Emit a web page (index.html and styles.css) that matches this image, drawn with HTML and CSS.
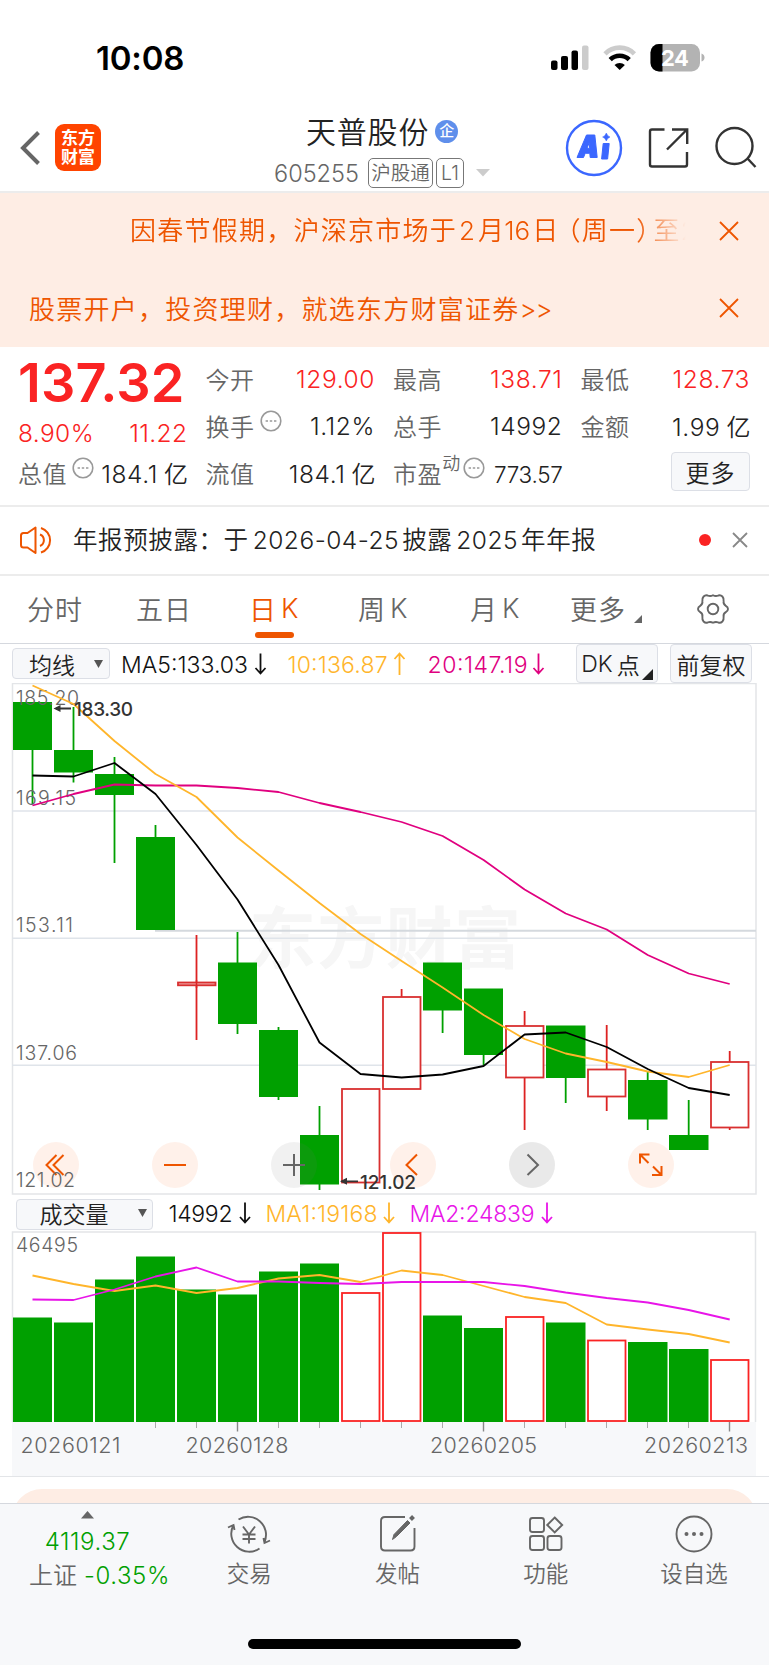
FILE: index.html
```html
<!DOCTYPE html>
<html lang="zh-CN">
<head>
  <meta charset="UTF-8" />
  <meta name="viewport" content="width=device-width, initial-scale=1.0"/>
  <title>天普股份 605255</title>
  <link rel="stylesheet" href="styles.css">
</head>
<body>
  <div class="status-bar">
    <span class="time">10:08</span>
    <svg class="status-icons" width="156" height="30" viewBox="549 42.500 156 30">
      <rect x="551" y="60" width="6.5" height="9.5" rx="2"/>
      <rect x="561" y="55.500" width="7" height="14" rx="2"/>
      <rect x="571.500" y="50" width="6.500" height="19.500" rx="2"/>
      <rect x="582" y="45" width="6.500" height="24.500" rx="2" fill="#ccc"/>
      <g fill="none" stroke-width="4.600">
        <path d="M605 53.300a20.500 20.500 0 0 1 29.400 0" stroke="#ccc"/>
        <path d="M610.200 59.200a13.500 13.500 0 0 1 19 0" stroke="#000"/>
      </g>
      <path d="M619.700 69.500l-5.200-5a7.500 7.500 0 0 1 10.400 0z"/>
      <clipPath id="battery"><rect x="650.500" y="43.500" width="49.500" height="27.500" rx="8.500"/></clipPath>
      <g clip-path="url(#battery)">
        <rect x="650" y="43" width="51" height="29" fill="#b3b3b3"/>
        <rect x="650" y="43" width="12.500" height="29"/>
      </g>
      <path d="M701.500 53q3 1 3 4t-3 4z" fill="#b3b3b3"/>
      <text x="661" y="65" class="battery-text" textLength="28">24</text>
    </svg>
  </div>

  <header class="header">
    <div class="header-left">
      <svg width="22" height="38" viewBox="0 0 22 38"><path d="M18.500 3.500L3 19l15.500 15.500" fill="none" stroke="#666" stroke-width="4"/></svg>
      <div class="logo"><span>东方</span><span>财富</span></div>
    </div>
    <div class="header-title">
      <div class="name">天普股份<span class="badge">企</span></div>
      <div class="code">
        <span class="code-num">605255</span>
        <span class="tag tag-hgt">沪股通</span>
        <span class="tag tag-l1">L1</span>
        <svg width="14" height="8" viewBox="0 0 14 8"><path d="M0 0h14L7 7.500z" fill="#ccc"/></svg>
      </div>
    </div>
    <svg class="header-icons" width="195" height="60" viewBox="564 118 195 60">
      <circle cx="594" cy="148" r="27" fill="none" stroke="#3b67ff" stroke-width="2.400"/>
      <g fill="#3b67ff" stroke="#3b67ff" stroke-linejoin="round">
        <path fill-rule="evenodd" stroke-width="1" d="M577 157.500l9.500-22.500h8.300l2.400 22.500h-7l-.4-4.200h-4.600l-1.700 4.200zM587 148.300h2.700l-.5-5.500z"/>
        <path stroke-width="1" d="M603.200 143.500h6l-1.600 15.500h-6z"/>
        <path stroke-width=".5" d="M606.300 133q1 3 3.700 4-2.700 1-3.700 4-1-3-3.700-4 2.700-1 3.700-4z"/>
      </g>
      <g fill="none" stroke="#333" stroke-width="2.400">
        <path d="M664.500 129.500H652q-2 0-2 2v33q0 2 2 2h33q2 0 2-2V152"/>
        <path d="M672 129.500h15.200V144M687 129.500l-20 20"/>
        <circle cx="734.500" cy="146" r="18"/>
        <path d="M747.500 158.500l8 8.500"/>
      </g>
    </svg>
  </header>

  <div class="notices">
    <div class="notice">
      <p class="marquee">因春节假期，沪深京市场于<i>2</i>月<i class="day">16</i>日<b>（</b>周一<b class="close">）</b>至2</p>
      <svg width="20" height="20" viewBox="0 0 20 20"><path d="M1 1l18 18M19 1L1 19"/></svg>
    </div>
    <div class="notice">
      <p>股票开户，投资理财，就选东方财富证券<em>&gt;&gt;</em></p>
      <svg width="20" height="20" viewBox="0 0 20 20"><path d="M1 1l18 18M19 1L1 19"/></svg>
    </div>
  </div>

  <section class="quote">
    <div class="col">
      <div class="price">137.32</div>
      <div class="cell change red"><span>8.90%</span><span>11.22</span></div>
      <div class="cell"><label>总值<svg class="more-dot" width="22" height="22" viewBox="0 0 22 22"><circle cx="11" cy="11" r="9.800"/><path d="M5.600 11h2.400M9.800 11h2.400M14 11h2.400"/></svg></label><span>184.1<u>亿</u></span></div>
    </div>
    <div class="col">
      <div class="cell"><label>今开</label><span class="red">129.00</span></div>
      <div class="cell"><label>换手<svg class="more-dot" width="22" height="22" viewBox="0 0 22 22"><circle cx="11" cy="11" r="9.800"/><path d="M5.600 11h2.400M9.800 11h2.400M14 11h2.400"/></svg></label><span>1.12%</span></div>
      <div class="cell"><label>流值</label><span>184.1<u>亿</u></span></div>
    </div>
    <div class="col">
      <div class="cell"><label>最高</label><span class="red">138.71</span></div>
      <div class="cell"><label>总手</label><span>14992</span></div>
      <div class="cell pe"><label>市盈<sup>动</sup><svg class="more-dot" width="22" height="22" viewBox="0 0 22 22"><circle cx="11" cy="11" r="9.800"/><path d="M5.600 11h2.400M9.800 11h2.400M14 11h2.400"/></svg></label><span>773.57</span></div>
    </div>
    <div class="col">
      <div class="cell"><label>最低</label><span class="red">128.73</span></div>
      <div class="cell"><label>金额</label><span>1.99<u>亿</u></span></div>
      <button class="btn btn-more">更多</button>
    </div>
  </section>

  <div class="bulletin">
    <svg width="34" height="30" viewBox="17 524.500 34 30" fill="none" stroke="#ee5500" stroke-width="2" stroke-linejoin="round">
      <path d="M34.500 527v25.500l-8-5.500h-4q-2.500 0-2.500-2.500v-9.500q0-2.500 2.500-2.500h4z"/>
      <path d="M39 534a6.200 6.200 0 0 1 0 11.500M40 527.500a12.800 12.800 0 0 1 0 24.500"/>
    </svg>
    <p>年报预披露：于<i>2026-04-25</i>披露<i>2025</i>年年报</p>
    <span class="dot"></span>
    <svg width="16" height="16" viewBox="0 0 16 16"><path d="M1 1l14 14M15 1L1 15" stroke="#888" stroke-width="1.800"/></svg>
  </div>

  <nav class="tabs">
    <a>分时</a>
    <a>五日</a>
    <a class="active">日<i>K</i></a>
    <a>周<i>K</i></a>
    <a>月<i>K</i></a>
    <a class="tab-more">更多<svg width="8" height="8" viewBox="0 0 8 8"><path d="M8 0v8H0z" fill="#666"/></svg></a>
    <svg class="gear" width="34" height="32" viewBox="-17 -16 34 32" fill="none" stroke="#666" stroke-width="1.900" stroke-linejoin="round">
      <path d="M-15 0q0-2 2.200-3.200 2.700-1.500 2.200-4.600-.4-3 1.200-4.700 1.800-1.800 4-1 2.800 1.200 5.400-.3 2.600 1.500 5.400.3 2.200-.8 4 1 1.600 1.700 1.200 4.700-.5 3.100 2.200 4.600Q15-2 15 0t-2.200 3.200q-2.700 1.500-2.200 4.600.4 3-1.200 4.700-1.800 1.800-4 1-2.800-1.200-5.400.3-2.600-1.500-5.400-.3-2.200.8-4-1-1.600-1.700-1.200-4.700.5-3.100-2.200-4.600Q-15 2-15 0z"/>
      <circle r="5.300"/>
    </svg>
  </nav>

  <div class="indicator-row">
    <button class="btn btn-ma">均线<svg width="9" height="8" viewBox="0 0 9 8"><path d="M0 0h9L4.500 8z" fill="#555"/></svg></button>
    <svg class="legend" width="450" height="32" viewBox="116 648 450 32">
      <text x="122" y="672.500" textLength="127">MA5:133.03</text>
      <text class="yellow" x="288.500" y="672.500" textLength="100">10:136.87</text>
      <text class="pink" x="428.500" y="672.500" textLength="100">20:147.19</text>
      <path d="M261.500 653.500v20M256.500 668l5 5.500 5-5.500" stroke="#111"/>
      <path d="M400.500 675v-21M395.500 659l5-5.500 5 5.500" stroke="#ffb52b"/>
      <path d="M539.500 653.500v20M534.500 668l5 5.500 5-5.500" stroke="#e0007f"/>
    </svg>
    <button class="btn btn-dk">DK<u>点</u><svg width="11" height="11" viewBox="0 0 11 11"><path d="M11 0v11H0z" fill="#222"/></svg></button>
    <button class="btn btn-fq">前复权</button>
  </div>

  <div class="kline">
    <svg width="769" height="513" viewBox="0 683 769 513">
      <text class="watermark" x="249" y="963" textLength="272">东方财富</text>
      <g fill="none" stroke="#dfe4ea" stroke-width="1.500">
        <path d="M12.500 683.500H756v510.500H12.500z" stroke="#e3e5e8"/>
        <path d="M12 811h744M12 938.300h744M12 1065.300h744"/>
      </g>
      <path d="M155 930.700h601" stroke="#d4d9de" stroke-width="2"/>

      <!-- wicks -->
      <path stroke="#00a000" stroke-width="1.800" d="M32.500 702v102M73.500 707v75.500M114.500 757v106M155.500 825v105M237.500 932v102M278.500 1027v73M319.500 1106v84M442.600 963v70M483.600 989v76M565.700 1026v77M647.700 1072v58M688.700 1100v40"/>
      <path stroke="#d22" stroke-width="1.800" d="M196.500 935v105M401.600 989v8M524.600 1011v15M524.600 1078v52M606.700 1025v44M606.700 1097v14M729.700 1051v11M729.700 1127v3"/>

      <!-- falling days -->
      <g fill="#00a000">
        <rect x="13" y="702" width="39" height="48"/>
        <rect x="54" y="750" width="39" height="22.500"/>
        <rect x="95" y="774" width="39" height="21"/>
        <rect x="136" y="837" width="39" height="93"/>
        <rect x="218" y="962.500" width="39" height="61.500"/>
        <rect x="259" y="1030" width="39" height="67"/>
        <rect x="300" y="1135" width="39" height="49.500"/>
        <rect x="423" y="962.500" width="39" height="48"/>
        <rect x="464" y="988.500" width="39" height="66.500"/>
        <rect x="546" y="1025.500" width="39.500" height="52.500"/>
        <rect x="628" y="1080" width="39.500" height="39.500"/>
        <rect x="669" y="1135" width="39.500" height="15"/>
      </g>

      <!-- rising days -->
      <g fill="#fff" stroke="#d93030" stroke-width="1.800">
        <rect x="178" y="982.500" width="37.500" height="2.800" fill="#f0b0b0"/>
        <rect x="342" y="1089" width="37.500" height="93.500"/>
        <rect x="383" y="997" width="37.500" height="92"/>
        <rect x="506" y="1026" width="37.500" height="51.500"/>
        <rect x="588" y="1069.500" width="37.500" height="27"/>
        <rect x="711" y="1062" width="37.500" height="65.500"/>
      </g>
      <path d="M196.500 980v8" stroke="#d22" stroke-width="1.500"/>

      <g class="axis">
        <text x="16" y="704.500" textLength="63">185.20</text>
        <text x="16" y="804.500" textLength="60">169.15</text>
        <text x="16" y="932" textLength="57">153.11</text>
        <text x="16" y="1059.500" textLength="61">137.06</text>
      </g>

      <g fill="none" stroke-width="1.800" stroke-linejoin="round">
        <polyline stroke="#e0007f" points="32.500,805.500 73.500,794 114.500,784.500 155.500,785.500 196.500,785.500 237.500,788 278.500,792 319.500,803 360.500,812 401.600,822 442.600,836 483.600,860 524.600,889.500 565.700,913.500 606.700,929.500 647.700,955 688.700,973.500 729.700,984"/>
        <polyline stroke="#ffb52b" points="32.500,685.500 73.500,704 114.500,741 155.500,774 196.500,797 237.500,837.500 278.500,870.500 319.500,903 360.500,934 401.600,961 442.600,987.500 483.600,1015 524.600,1039 565.700,1053.500 606.700,1062 647.700,1071.500 688.700,1077 729.700,1065"/>
        <polyline stroke="#000" points="32.500,775.500 73.500,776.500 114.500,763 155.500,794 196.500,845 237.500,899.500 278.500,965 319.500,1042.500 360.500,1074 401.600,1077.500 442.600,1074.500 483.600,1066 524.600,1034.500 565.700,1032.500 606.700,1047 647.700,1069 688.700,1088 729.700,1095"/>
      </g>
    </svg>
    <div class="controls">
      <button class="round"><svg width="46" height="46" viewBox="0 0 46 46"><path d="M23.500 13l-10 10 10 10M30.500 13l-10 10 10 10"/></svg></button>
      <button class="round"><svg width="46" height="46" viewBox="0 0 46 46"><path d="M12 23h22"/></svg></button>
      <button class="round gray light"><svg width="46" height="46" viewBox="0 0 46 46"><path d="M12 23h22M23 12v22"/></svg></button>
      <button class="round"><svg width="46" height="46" viewBox="0 0 46 46"><path d="M27 12.500L16.500 23 27 33"/></svg></button>
      <button class="round gray"><svg width="46" height="46" viewBox="0 0 46 46"><path d="M18.500 12.500L29 23 18.500 33"/></svg></button>
      <button class="round"><svg width="46" height="46" viewBox="0 0 46 46"><path d="M12 21.500V12.500h9.500M12.500 13l8 8M33.500 24v9H24M33 32.500l-8-8"/></svg></button>
    </div>
    <!-- period high and low, above the controls -->
    <svg class="marks" width="769" height="513" viewBox="0 683 769 513">
      <path d="M56 708.500h15M341.500 1181.300H358" stroke="#333" stroke-width="1.800"/>
      <path d="M53.500 708.500l7-3.500v7zM340 1181.300l7-3.500v7z"/>
      <text x="74" y="716" textLength="59">183.30</text>
      <text x="360" y="1189" textLength="56">121.02</text>
      <text class="axis" x="16" y="1187" textLength="59">121.02</text>
    </svg>
  </div>

  <div class="indicator-row volume-row">
    <button class="btn btn-vol">成交量<svg width="9" height="8" viewBox="0 0 9 8"><path d="M0 0h9L4.500 8z" fill="#555"/></svg></button>
    <svg class="legend" width="410" height="32" viewBox="158.500 1198 410 32">
      <text x="169" y="1221.500" textLength="64">14992</text>
      <text class="yellow" x="266" y="1221.500" textLength="112">MA1:19168</text>
      <text class="purple" x="410" y="1221.500" textLength="125">MA2:24839</text>
      <path d="M245.500 1202.500v20M240.500 1217l5 5.500 5-5.500" stroke="#111"/>
      <path d="M389.500 1202.500v20M384.500 1217l5 5.500 5-5.500" stroke="#ffb52b"/>
      <path d="M547.500 1202.500v20M542.500 1217l5 5.500 5-5.500" stroke="#e815e8"/>
    </svg>
  </div>

  <div class="volume">
    <svg width="769" height="246" viewBox="0 1231 769 246">
      <rect x="12" y="1422" width="744" height="54" fill="#f7f8fa"/>
      <path d="M12.500 1422V1232H755.500v190" fill="none" stroke="#e3e5e8" stroke-width="1.500"/>
      <text class="axis" x="16" y="1251.500" textLength="62">46495</text>
      <g fill="#00a000">
        <rect x="13" y="1317.500" width="39" height="104.500"/>
        <rect x="54" y="1322.500" width="39" height="99.500"/>
        <rect x="95" y="1279.500" width="39" height="142.500"/>
        <rect x="136" y="1256.500" width="39" height="165.500"/>
        <rect x="177" y="1289.500" width="39" height="132.500"/>
        <rect x="218" y="1294.500" width="39" height="127.500"/>
        <rect x="259" y="1271.500" width="39" height="150.500"/>
        <rect x="300" y="1263.500" width="39" height="158.500"/>
        <rect x="423" y="1315.500" width="39" height="106.500"/>
        <rect x="464" y="1328" width="39" height="94"/>
        <rect x="546" y="1322.500" width="39.500" height="99.500"/>
        <rect x="628" y="1342" width="39.500" height="80"/>
        <rect x="669" y="1349" width="39.500" height="73"/>
      </g>
      <g fill="#fff" stroke="#fa2323" stroke-width="1.800">
        <rect x="342" y="1293" width="37.500" height="128"/>
        <rect x="383" y="1233" width="37.500" height="188"/>
        <rect x="506" y="1317" width="37.500" height="104"/>
        <rect x="588" y="1340.500" width="37.500" height="80.500"/>
        <rect x="711" y="1360" width="37.500" height="61"/>
      </g>
      <g fill="none" stroke-width="1.800" stroke-linejoin="round">
        <polyline stroke="#ffb52b" points="32.500,1275.500 73.500,1284 114.500,1291 155.500,1285.500 196.500,1293 237.500,1288 278.500,1278.500 319.500,1275 360.500,1282 401.600,1270.500 442.600,1275 483.600,1286 524.600,1297 565.700,1303 606.700,1324.500 647.700,1329.500 688.700,1334 729.700,1342.500"/>
        <polyline stroke="#e815e8" points="32.500,1299.500 73.500,1300 114.500,1289.500 155.500,1276.500 196.500,1267.500 237.500,1281.500 278.500,1281.500 319.500,1283 360.500,1284 401.600,1282 442.600,1282 483.600,1282 524.600,1286 565.700,1292.500 606.700,1298 647.700,1302.500 688.700,1310 729.700,1319.500"/>
      </g>
      <path stroke="#aaa" d="M155.500 1422v6M196.500 1422v6M278.500 1422v6M319.500 1422v6M360.500 1422v6M401.500 1422v6M442.500 1422v6M524.500 1422v6M565.500 1422v6M606.500 1422v6M647.500 1422v6M688.500 1422v6"/>
      <path stroke="#888" stroke-width="1.400" d="M237.500 1422v9.500M483.500 1422v9.500M729.500 1422v9.500"/>
      <g class="dates">
        <text x="20.500" y="1452.700" textLength="100">20260121</text>
        <text x="185.500" y="1452.700" textLength="103">20260128</text>
        <text x="430" y="1452.700" textLength="107">20260205</text>
        <text x="644" y="1452.700" textLength="104">20260213</text>
      </g>
    </svg>
  </div>

  <div class="next-card"><div class="card-top"></div></div>

  <footer class="bottom-bar">
    <div class="index">
      <svg width="13" height="8" viewBox="0 0 13 8"><path d="M6.500 0L13 7.500H0z" fill="#666"/></svg>
      <div class="index-value">4119.37</div>
      <div class="index-name">上证<span>-0.35%</span></div>
    </div>
    <div class="nav-item">
      <svg width="46" height="42" viewBox="227 1513 46 42">
        <path d="M239.500 1519.500a18 18 0 0 1 26 22.500M260.500 1548.500a18 18 0 0 1-26-23.500M229 1527.500l5.500-2.500 1 5M271 1540.500l-5.500 2.500-1-5"/>
        <path d="M244 1526.500l6 8 6-8M250 1534.500v9M243.500 1534.500h13M243.500 1539h13"/>
      </svg>
      <span>交易</span>
    </div>
    <div class="nav-item">
      <svg width="46" height="42" viewBox="375 1513 46 42">
        <path d="M406 1517h-20q-4 0-4 4v25.500q0 4 4 4h25.500q4 0 4-4V1528"/>
        <path d="M393.500 1539.500l1.500-5 13.500-14 2.500 2.500-13.500 13.500z" fill="#666" stroke-width="1"/>
        <path d="M411.500 1519.500l3-3" stroke-width="4"/>
      </svg>
      <span>发帖</span>
    </div>
    <div class="nav-item">
      <svg width="46" height="42" viewBox="524 1513 46 42">
        <rect x="531" y="1518" width="14" height="14" rx="2.500"/>
        <rect x="531" y="1536" width="14" height="14" rx="2.500"/>
        <rect x="548.500" y="1536" width="14" height="14" rx="2.500"/>
        <path d="M555.700 1517.500l7.500 7.500-7.500 7.500-7.500-7.500z"/>
      </svg>
      <span>功能</span>
    </div>
    <div class="nav-item">
      <svg width="46" height="42" viewBox="672 1513 46 42">
        <circle cx="695" cy="1534" r="17.500"/>
        <g fill="#666" stroke="none"><circle cx="687.500" cy="1534" r="2"/><circle cx="695" cy="1534" r="2"/><circle cx="702.500" cy="1534" r="2"/></g>
      </svg>
      <span>设自选</span>
    </div>
    <div class="home-indicator"></div>
  </footer>
</body>
</html>
```

FILE: styles.css
```css
*, *::before, *::after {
  box-sizing: border-box;
}

body {
  margin: 0;
  width: 769px;
  height: 1665px;
  overflow: hidden;
  background: #fff;
  color: #222;
  font-family: Inter, "Noto Sans CJK SC", sans-serif;
  font-weight: 360;
  display: flex;
  flex-direction: column;
}

svg {
  display: block;
  flex: none;
}

p {
  margin: 0;
}

i, em, u {
  font-style: normal;
  text-decoration: none;
}

button {
  font-family: inherit;
  font-weight: inherit;
  color: inherit;
  padding: 0;
  border: none;
}

.red {
  color: #fa2323;
}

/* status bar */
.status-bar {
  height: 115px;
  padding: 0 64px 0 96px;
  display: flex;
  justify-content: space-between;
  align-items: center;
}

.time {
  font-size: 33px;
  font-weight: 600;
  color: #000;
  letter-spacing: -0.2px;
}

.battery-text {
  font-size: 22px;
  font-weight: 700;
  fill: #fff;
}

/* header */
.header {
  height: 78px;
  border-bottom: 2px solid #ececec;
  padding: 0 10px 0 20px;
  display: grid;
  grid-template-columns: 255px 1fr 195px;
}

.header-left {
  display: flex;
  align-items: center;
  gap: 13px;
  height: 65px;
}

.logo {
  width: 46px;
  height: 47px;
  border-radius: 9px;
  background: #ff4400;
  color: #fff;
  font-size: 17px;
  font-weight: 700;
  line-height: 19px;
  display: flex;
  flex-direction: column;
  align-items: center;
  justify-content: center;
}

.name {
  height: 34px;
  padding: 0 0 5px 31px;
  display: flex;
  align-items: center;
  font-size: 30px;
  letter-spacing: 0.8px;
}

.badge {
  width: 23px;
  height: 23px;
  margin: 4px 0 0 6px;
  border-radius: 50%;
  background: #5f8feb;
  color: #fff;
  font-size: 15px;
  font-weight: 500;
  line-height: 22px;
  text-align: center;
  letter-spacing: 0;
}

.code {
  margin-top: 9px;
  display: flex;
  align-items: center;
  height: 30px;
  color: #666;
}

.code-num {
  width: 93px;
  margin-left: -1px;
  margin-right: 1px;
  font-size: 23.5px;
  letter-spacing: 0;
}

.tag {
  height: 30px;
  border: 1px solid #777;
  border-radius: 5px;
  font-size: 19.5px;
  line-height: 28px;
  text-align: center;
}

.tag-hgt {
  width: 65px;
}

.tag-l1 {
  width: 28px;
  margin: 0 12px 0 3px;
}

.header-icons {
  margin-top: 3px;
}

/* notices */
.notices {
  height: 154px;
  background: #feede4;
  color: #ee5500;
}

.notice {
  height: 80px;
  padding: 0 30px 0 29px;
  display: flex;
  align-items: center;
  justify-content: space-between;
  font-size: 26px;
  letter-spacing: 1.25px;
  white-space: nowrap;
}

.notice:first-child {
  height: 75px;
}

.notice p {
  width: 661px;
  padding-bottom: 2px;
}

.notice em {
  letter-spacing: -1px;
}

.notice svg {
  fill: none;
  stroke: #ee5500;
  stroke-width: 1.8;
}

.notice .marquee {
  padding: 0 0 4px 101px;
  overflow: hidden;
  -webkit-mask-image: linear-gradient(90deg, #000 605px, transparent 657px);
  mask-image: linear-gradient(90deg, #000 605px, transparent 657px);
}

.marquee i {
  margin: 0 3px 0 2px;
  letter-spacing: 0;
}

.marquee .day {
  margin: 0 2px 0 -1px;
}

.marquee b {
  margin-left: 8px;
  font-weight: inherit;
  font-feature-settings: "halt";
}

.marquee .close {
  margin: 0 3px 0 0;
}

/* quote */
.quote {
  height: 160px;
  padding: 0 19px 0 18px;
  border-bottom: 2px solid #ececec;
  display: grid;
  grid-template-columns: repeat(4, 169.500px);
  column-gap: 18px;
}

.col {
  padding-top: 8px;
}

.price {
  height: 54px;
  margin-bottom: 7px;
  color: #fa2323;
  font-size: 54px;
  font-weight: 600;
  line-height: 55px;
  letter-spacing: 0.200px;
}

.cell {
  height: 47px;
  display: flex;
  align-items: center;
  justify-content: space-between;
  font-size: 24.5px;
  letter-spacing: 0.6px;
  white-space: nowrap;
}

.change {
  height: 33px;
  letter-spacing: 0.4px;
}

.cell label {
  display: flex;
  align-items: center;
  color: #666;
  font-size: 24px;
  letter-spacing: 0.6px;
}

.cell u {
  margin: 0 -1px 0 6px;
  font-size: 24px;
}

.cell sup {
  font-size: 18px;
  margin-top: -17px;
  line-height: 20px;
}

.more-dot {
  margin: -10px 0 0 5px;
  fill: none;
  stroke: #999;
  stroke-width: 1.6;
}

.pe .more-dot {
  margin-left: 2px;
}

.pe span {
  font-size: 22.5px;
  letter-spacing: -0.3px;
  margin-top: 4px;
}

.btn {
  display: flex;
  align-items: center;
  justify-content: center;
  background: #f7f8fa;
  border: 1.500px solid #dcdfe6;
  border-radius: 4px;
  font-size: 23px;
}

.btn-more {
  width: 79px;
  height: 39px;
  margin: 3px 0 0 auto;
  font-size: 24px;
  letter-spacing: 1px;
}

/* bulletin */
.bulletin {
  height: 69px;
  border-bottom: 2px solid #ececec;
  padding: 0 21px 2px 18px;
  display: flex;
  align-items: center;
}

.bulletin p {
  width: 626px;
  margin-left: 21px;
  padding-bottom: 2px;
  font-size: 24.500px;
  letter-spacing: 0.6px;
  white-space: nowrap;
}

.bulletin i {
  margin: 0 3px 0 4px;
  letter-spacing: 0.5px;
}

.dot {
  width: 12px;
  height: 12px;
  margin: 0 21px 0 auto;
  border-radius: 50%;
  background: #fa2323;
}

/* tabs */
.tabs {
  height: 68px;
  border-bottom: 1.500px solid #d5d8de;
  padding-left: 27px;
  display: grid;
  grid-template-columns: 109px 113px 109px 112px 100px 126px 34px;
  color: #666;
  font-size: 27px;
}

.tabs a {
  height: 65px;
  display: flex;
  align-items: center;
  letter-spacing: 1px;
}

.tabs i {
  margin-left: 4px;
}

.tabs .active {
  color: #ee5500;
  position: relative;
}

.tabs .active::after {
  content: "";
  position: absolute;
  left: 6px;
  bottom: 3px;
  width: 39px;
  height: 6px;
  border-radius: 3px;
  background: #ee5500;
}

.tab-more svg {
  margin: 21px 0 0 8px;
}

.gear {
  margin-top: 17px;
}

/* indicator rows */
.indicator-row {
  height: 39px;
  padding: 0 17px 0 12px;
  display: flex;
  align-items: center;
}

.legend {
  margin-left: 5px;
  fill: none;
  stroke-width: 1.800;
}

.legend text {
  font-size: 23px;
  fill: #111;
}

.legend .yellow {
  fill: #ffb52b;
}

.legend .pink {
  fill: #e0007f;
}

.legend .purple {
  fill: #e815e8;
}

.btn-ma {
  width: 98px;
  height: 31px;
  gap: 19px;
  padding-left: 10px;
}

.btn-dk {
  width: 82px;
  height: 39px;
  margin-left: 11px;
}

.btn-dk u {
  margin-left: 4px;
}

.btn-dk svg {
  margin: 21px 0 0 2px;
}

.btn-fq {
  width: 82px;
  height: 39px;
  margin-left: 12px;
}

/* charts */
.kline {
  height: 512px;
  position: relative;
}

.watermark {
  font-size: 67px;
  font-weight: 700;
  fill: #f6f6f6;
}

.axis {
  font-size: 19.500px;
  font-weight: 360;
  fill: #666;
}

.marks {
  position: absolute;
  left: 0;
  top: 0;
  pointer-events: none;
  font-size: 19px;
  font-weight: 500;
  fill: #333;
}

.controls {
  position: absolute;
  left: 33px;
  top: 459px;
  display: flex;
  gap: 73px;
}

.round {
  width: 46px;
  height: 46px;
  border-radius: 50%;
  background: rgba(255, 218, 200, 0.38);
}

.round svg {
  fill: none;
  stroke: #ee5500;
  stroke-width: 2;
}

.gray {
  background: rgba(120, 120, 120, 0.16);
}

.light {
  background: rgba(120, 120, 120, 0.1);
}

.gray svg {
  stroke: #666;
}

.volume-row {
  height: 36px;
  padding: 2px 16px 0;
}

.btn-vol {
  width: 137px;
  height: 31px;
  gap: 29px;
  padding: 0 0 2px 17px;
}

.volume {
  height: 246px;
  border-bottom: 1.500px solid #e3e5e8;
}

.dates {
  font-size: 21.500px;
  fill: #666;
}

.next-card {
  height: 26px;
  padding: 12px 12px 0;
  overflow: hidden;
}

.card-top {
  height: 60px;
  border-radius: 32px;
  background: #feede4;
}

/* bottom bar */
.bottom-bar {
  flex: 1;
  border-top: 1.500px solid #d5d8de;
  background: #f7f8fa;
  display: grid;
  grid-template-columns: 175px repeat(4, 148.300px);
  grid-template-rows: 135px 10px;
  color: #666;
}

.index {
  padding-top: 7px;
  display: flex;
  flex-direction: column;
  align-items: center;
  font-size: 24px;
}

.index-value {
  margin-top: 8px;
  line-height: 30px;
  color: #00a000;
  letter-spacing: 0.600px;
}

.index-name {
  display: flex;
  margin: 3px 0 0 24px;
  line-height: 32px;
  white-space: nowrap;
}

.index-name span {
  margin-left: 7px;
  color: #00a000;
  letter-spacing: 0.600px;
}

.nav-item {
  padding-top: 9px;
  display: flex;
  flex-direction: column;
  align-items: center;
  gap: 4px;
  font-size: 22.500px;
  line-height: 30px;
}

.nav-item svg {
  fill: none;
  stroke: #666;
  stroke-width: 1.900;
}

.home-indicator {
  grid-column: 1 / -1;
  justify-self: center;
  width: 273px;
  height: 10px;
  border-radius: 5px;
  background: #000;
}
```
